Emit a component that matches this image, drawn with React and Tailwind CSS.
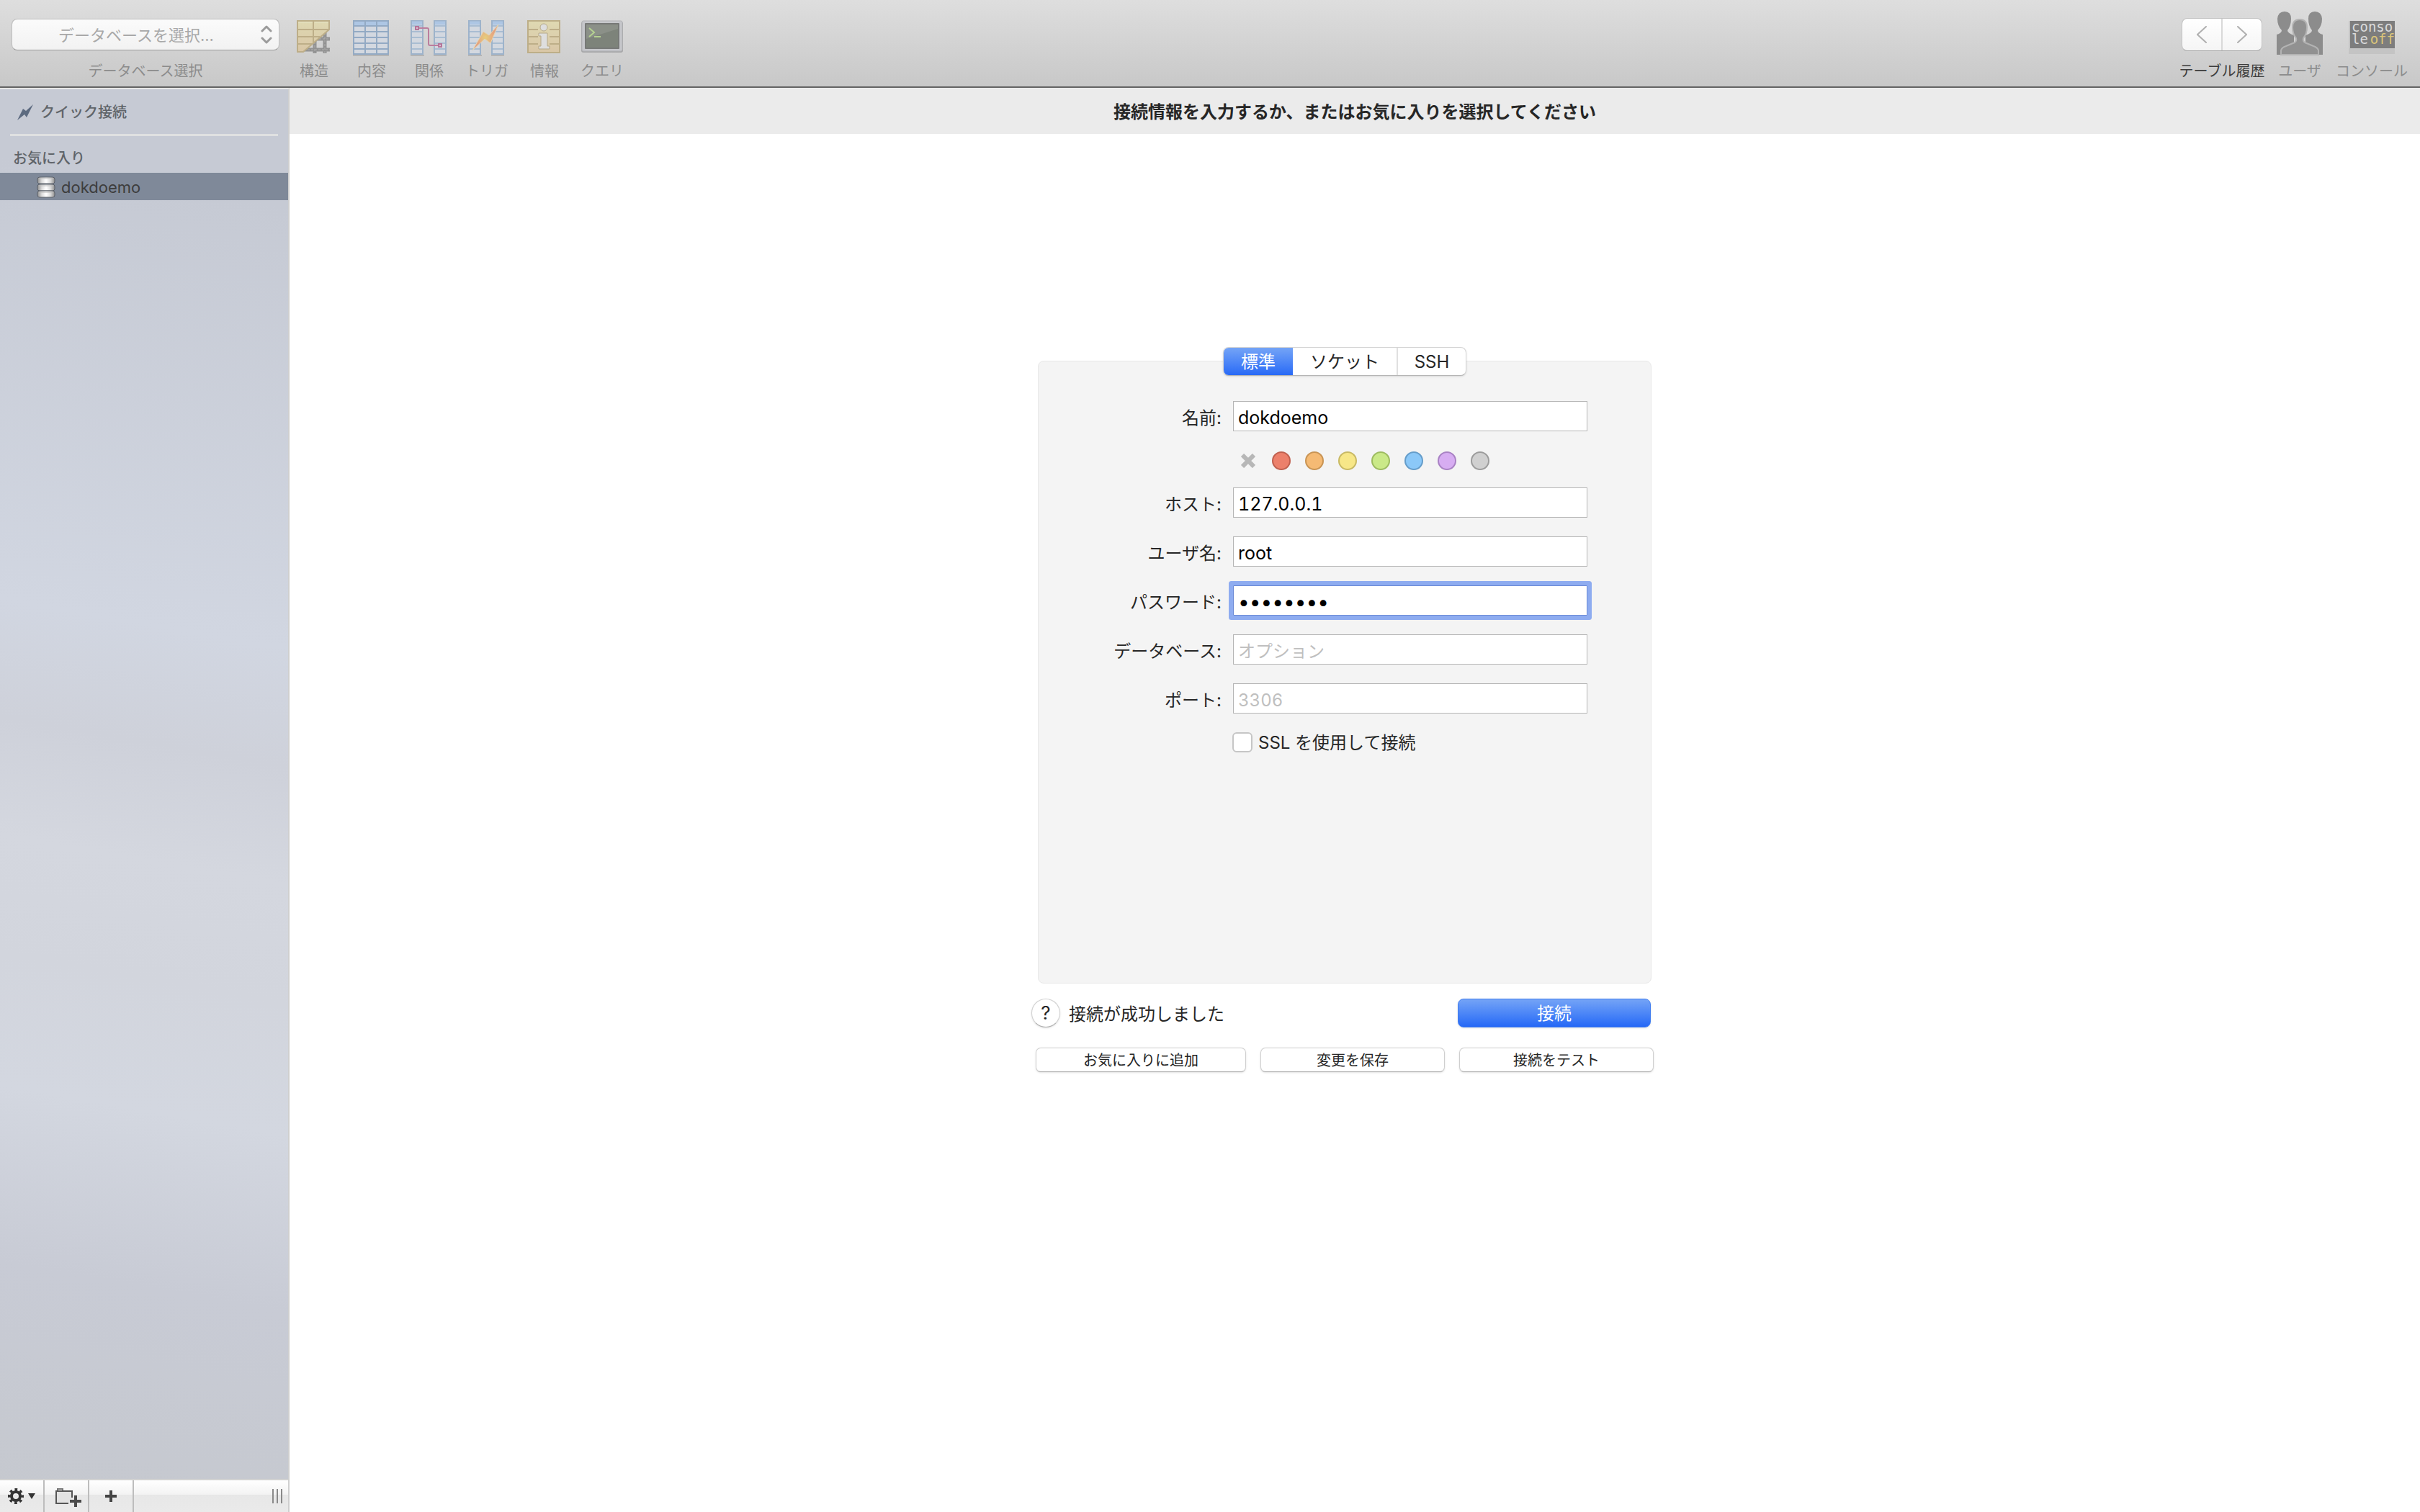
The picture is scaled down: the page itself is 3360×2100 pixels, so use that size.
// File: src/App.jsx
import { useState } from 'react';

// --- Toolbar icons ---

function StructureIcon() {
  return (
    <svg viewBox="0 0 60 60" className="w-[60px] h-[60px]" fill="none">
      <defs>
        <linearGradient id="sand" x1="0" y1="0" x2="0" y2="1">
          <stop offset="0" stopColor="#dfd9b2" />
          <stop offset="1" stopColor="#d9c6a6" />
        </linearGradient>
      </defs>
      <g stroke="#929292" strokeWidth="5">
        <path d="M30 36H52M14 51H52M31 36V56M45 26V56" />
      </g>
      <g stroke="#b0b0b0" strokeWidth="1">
        <path d="M32 36H52M16 51H52M45 28V56M31 40V56" strokeDasharray="3 2" />
      </g>
      <path d="M7 11H51V23L15 54H7Z" fill="url(#sand)" stroke="#bdae88" strokeWidth="2" />
      <path d="M29 12V41M8 23H50M8 33H38M8 43H27" stroke="#bdae88" strokeWidth="2" />
      <path d="M8 13H28M31 13H50" stroke="#e6e2c6" strokeWidth="1" />
    </svg>
  );
}

function ContentIcon() {
  return (
    <svg viewBox="0 0 60 60" className="w-[60px] h-[60px]" fill="none">
      <path d="M4 59H54" stroke="#b4b4b4" strokeWidth="2" />
      <rect x="5" y="11" width="48" height="46" fill="#d3d8e0" stroke="#93aac4" strokeWidth="2" />
      <rect x="6" y="12" width="46" height="5" fill="#adc6e4" />
      <path
        d="M6 18H52M6 26H52M6 34H52M6 42H52M6 50H52M21 11V57M37 11V57"
        stroke="#93aac4"
        strokeWidth="2"
      />
    </svg>
  );
}

function TwoTables() {
  return (
    <>
      <path d="M4 59H23M36 59H54" stroke="#b4b4b4" strokeWidth="2" />
      <rect x="5" y="11" width="16" height="46" fill="#d3d8e0" stroke="#9db3cb" strokeWidth="2" />
      <rect x="37" y="11" width="16" height="46" fill="#d3d8e0" stroke="#9db3cb" strokeWidth="2" />
      <path d="M6 14H20M38 14H52" stroke="#adc6e4" strokeWidth="5" />
      <path
        d="M6 18H20M6 26H20M6 34H20M6 42H20M6 50H20M38 18H52M38 26H52M38 34H52M38 42H52M38 50H52"
        stroke="#a9bdd2"
        strokeWidth="2"
      />
    </>
  );
}

function RelationsIcon() {
  return (
    <svg viewBox="0 0 60 60" className="w-[60px] h-[60px]" fill="none">
      <TwoTables />
      <path d="M15 21H27Q29 21 29 23V43Q29 45 31 45H43" stroke="#bb7e9e" strokeWidth="2" />
      <rect x="11" y="19" width="4" height="4" fill="#dcc3d3" stroke="#b5759a" strokeWidth="2" />
      <rect x="43" y="43" width="4" height="4" fill="#dcc3d3" stroke="#b5759a" strokeWidth="2" />
    </svg>
  );
}

function TriggersIcon() {
  return (
    <svg viewBox="0 0 60 60" className="w-[60px] h-[60px]" fill="none">
      <defs>
        <radialGradient id="bolt">
          <stop offset="0" stopColor="#e6cd7c" />
          <stop offset="0.6" stopColor="#e6a981" />
          <stop offset="1" stopColor="#e09a80" />
        </radialGradient>
      </defs>
      <TwoTables />
      <path
        d="M46 16L35 42L27 36L10 52L25 26L33 31Z"
        fill="url(#bolt)"
        stroke="#e5d5b0"
        strokeWidth="1"
      />
    </svg>
  );
}

function InfoIcon() {
  return (
    <svg viewBox="0 0 60 60" className="w-[60px] h-[60px]" fill="none">
      <rect x="7" y="11" width="44" height="44" fill="url(#sand)" stroke="#bdae88" strokeWidth="2" />
      <path
        d="M8 23H21M37 23H50M8 33H21M37 33H50M8 43H21M37 43H50M6 55H52"
        stroke="#bdae88"
        strokeWidth="2"
      />
      <circle cx="29" cy="20" r="5" fill="#dedede" stroke="#b5a98a" strokeWidth="1" />
      <path
        d="M22 28H34V46H37V50H22V46H25V32H22Z"
        fill="#dedede"
        stroke="#b5a98a"
        strokeWidth="1"
        strokeLinejoin="round"
      />
    </svg>
  );
}

function QueryIcon() {
  return (
    <svg viewBox="0 0 60 60" className="w-[60px] h-[60px]" fill="none">
      <rect x="1" y="12" width="58" height="43" rx="3" fill="#a6a6a8" />
      <rect x="2" y="11" width="56" height="42" rx="2" fill="#c6c7cb" stroke="#b2b3b6" strokeWidth="1" />
      <rect x="6" y="14" width="48" height="36" rx="1" fill="#777977" />
      <rect x="8" y="16" width="44" height="32" fill="#7d837a" />
      <path d="M8 16H52V22L8 36Z" fill="#8b9088" />
      <path d="M12 21L19 27L12 33M19 33H28" stroke="#b5d191" strokeWidth="2" />
    </svg>
  );
}

function UsersIcon() {
  return (
    <svg viewBox="0 0 64 64" className="w-16 h-16">
      <g fill="#8c8c8c">
        <path d="M0 60V32Q7 30 7 26Q1 20 1 10Q2 0 11 0Q20 0 20 10Q20 20 15 26Q15 30 24 33V60Z" />
        <path d="M64 60V32Q57 30 57 26Q63 20 63 10Q62 0 53 0Q44 0 44 10Q44 20 49 26Q49 30 40 33V60Z" />
      </g>
      <path
        d="M6 60V54Q7 50 13 48L25 43Q28 41 27 37Q22 31 22 22Q22 11 32 11Q42 11 42 22Q42 31 37 37Q36 41 39 43L51 48Q57 50 58 54V60Z"
        fill="#919191"
        stroke="#b3b3b3"
        strokeWidth="2"
      />
      <path d="M0 61H64V64H0Z" fill="#cecece" />
    </svg>
  );
}

function ConsoleIcon() {
  return (
    <div className="w-16 h-[54px] flex flex-col border-t-8 border-[#d9d9d9] bg-[#c4c4c4] pl-0.5 pb-2">
      <div className="flex-1 pl-0.5 bg-[#7d7d7d] font-['DejaVu_Sans_Mono',monospace] text-[19px] leading-[17px] text-left text-[#dadada]">
        <div>conso</div>
        <div className="flex justify-between">
          le<span className="text-[#dcc579]">off</span>
        </div>
      </div>
    </div>
  );
}

// --- Sidebar icons ---

function BoltIcon() {
  return (
    <svg viewBox="0 0 22 22" className="w-[22px] h-[22px]">
      <path d="M22 0L13 18L10 14L0 22L8 6L12 9Z" fill="#5d6b80" />
    </svg>
  );
}

function DatabaseIcon() {
  return (
    <svg viewBox="0 0 26 30" className="w-[26px] h-[30px]">
      <defs>
        <linearGradient id="disk">
          <stop offset="0" stopColor="#8d8d8d" />
          <stop offset="0.25" stopColor="#dcdcdc" />
          <stop offset="0.5" stopColor="#ffffff" />
          <stop offset="0.75" stopColor="#dcdcdc" />
          <stop offset="1" stopColor="#8d8d8d" />
        </linearGradient>
      </defs>
      {[1, 11, 20].map((y) => (
        <g key={y}>
          <rect x="1" y={y} width="24" height="9" rx="3" fill="url(#disk)" stroke="#5b6069" strokeWidth="1" />
          <path d={`M3 ${y + 2}H23`} stroke="#b9b9b9" strokeWidth="1" />
        </g>
      ))}
    </svg>
  );
}

function GearIcon() {
  return (
    <svg viewBox="0 0 22 22" className="w-[22px] h-[22px]" fill="none" stroke="#333">
      <circle cx="11" cy="11" r="6" strokeWidth="4" />
      <circle cx="11" cy="11" r="9" strokeWidth="4" strokeDasharray="3.6 3.47" strokeDashoffset="1.8" />
    </svg>
  );
}

function FolderPlusIcon() {
  return (
    <svg viewBox="0 0 38 28" className="w-[38px] h-7" fill="none" stroke="#555" strokeWidth="2">
      <path d="M20 22H3V5H25V14" fill="#e2e2e2" />
      <path d="M5 4V2H12V4" stroke="#777" />
      <path d="M30 11V27M22 19H38" strokeWidth="4" stroke="#4a4a4a" />
    </svg>
  );
}

// --- Shared pieces ---

function Tool({ label, children, className = 'w-20' }) {
  return (
    <button type="button" className={`flex flex-col items-center ${className}`}>
      <span className="h-[76px] flex items-center">{children}</span>
      <span className="text-[20px] leading-[26px] whitespace-nowrap text-[#8c8c8c]">{label}</span>
    </button>
  );
}

function Field({ id, label, type = 'text', focused = false, ...rest }) {
  return (
    <div className="flex items-center gap-4">
      <label htmlFor={id} className="w-[254px] pt-1.5 text-right text-[24px] leading-8 text-[#262626]">
        {label}
      </label>
      <input
        id={id}
        type={type}
        className={`w-[492px] h-[42px] px-1.5 pt-1 border bg-white text-black tabular-nums outline-none placeholder:text-[24px] placeholder:text-[#bfbfbf] ${
          focused
            ? 'text-[28px] border-[#6b8ad6] rounded-[1px] ring-6 ring-[#8eacf0]'
            : 'text-[25px] border-[#b5b5b5]'
        }`}
        {...rest}
      />
    </div>
  );
}

function SmallButton({ children, className }) {
  return (
    <button
      type="button"
      className={`h-[34px] pt-0.5 rounded-[7px] border border-[#cfcfcf] border-b-[#b0b0b0] bg-white text-[20px] leading-6 text-[#262626] shadow-sm ${className}`}
    >
      {children}
    </button>
  );
}

const tools = [
  { label: '構造', Icon: StructureIcon },
  { label: '内容', Icon: ContentIcon },
  { label: '関係', Icon: RelationsIcon },
  { label: 'トリガ', Icon: TriggersIcon },
  { label: '情報', Icon: InfoIcon },
  { label: 'クエリ', Icon: QueryIcon },
];

const tabs = [
  { name: '標準', width: 'w-24' },
  { name: 'ソケット', width: 'w-36' },
  { name: 'SSH', width: 'w-24' },
];

const colors = [
  { name: '赤', style: 'bg-[#ec806b] border-[#c0604f]' },
  { name: 'オレンジ', style: 'bg-[#f5ba74] border-[#c99454]' },
  { name: '黄', style: 'bg-[#f7e788] border-[#c8b964]' },
  { name: '緑', style: 'bg-[#cae988] border-[#9dbb60]' },
  { name: '青', style: 'bg-[#8bc8f8] border-[#659dca]' },
  { name: '紫', style: 'bg-[#d7adf2] border-[#a982c4]' },
  { name: 'グレー', style: 'bg-[#d0d0d0] border-[#9c9c9c]' },
];

function Toolbar() {
  return (
    <header className="flex justify-between h-[122px] pt-2.5 pl-4 pr-[15px] bg-linear-to-b from-[#dedede] to-[#c8c8c8] border-b-2 border-[#636363]">
      <div className="flex">
        <div className="w-[372px] mr-2 flex flex-col items-center">
          <div className="w-full h-[76px] flex items-center">
            <div className="relative w-full">
              <select
                id="database"
                className="appearance-none w-full h-11 pl-16 pt-0.5 rounded-lg border border-[#bcbcbc] border-b-[#999] bg-linear-to-b from-[#fbfbfb] to-[#f2f2f2] text-[22px] text-[#a8a8a8]"
              >
                <option>データベースを選択...</option>
              </select>
              <svg
                viewBox="0 0 16 26"
                className="absolute right-2.5 top-[9px] w-4 h-[26px] pointer-events-none"
                fill="none"
                stroke="#9b9b9b"
                strokeWidth="3"
                strokeLinecap="round"
                strokeLinejoin="round"
              >
                <path d="M2 8L8 2L14 8M2 18L8 24L14 18" />
              </svg>
            </div>
          </div>
          <label htmlFor="database" className="text-[20px] leading-[26px] text-[#8c8c8c]">
            データベース選択
          </label>
        </div>
        {tools.map(({ label, Icon }) => (
          <Tool key={label} label={label}>
            <Icon />
          </Tool>
        ))}
      </div>

      <div className="flex">
        <div className="w-[120px] flex flex-col items-center">
          <div className="h-[76px] flex items-center">
            <div className="flex w-28 h-[46px] rounded-lg border border-[#c2c2c2] border-b-[#a5a5a5] bg-linear-to-b from-white to-[#f5f5f5] divide-x-2 divide-[#d9d9d9]">
              <button type="button" aria-label="戻る" className="flex-1 flex items-center justify-center">
                <svg viewBox="0 0 14 24" className="w-3.5 h-6" fill="none" stroke="#b0b0b0" strokeWidth="2" strokeLinecap="round">
                  <path d="M13 1L1 12L13 23" />
                </svg>
              </button>
              <button type="button" aria-label="進む" className="flex-1 flex items-center justify-center">
                <svg viewBox="0 0 14 24" className="w-3.5 h-6" fill="none" stroke="#b0b0b0" strokeWidth="2" strokeLinecap="round">
                  <path d="M1 1L13 12L1 23" />
                </svg>
              </button>
            </div>
          </div>
          <span className="text-[20px] leading-[26px] text-[#3c3c3c] whitespace-nowrap">テーブル履歴</span>
        </div>
        <Tool label="ユーザ" className="w-24">
          <UsersIcon />
        </Tool>
        <Tool label="コンソール" className="w-[104px]">
          <ConsoleIcon />
        </Tool>
      </div>
    </header>
  );
}

function Sidebar() {
  return (
    <aside className="w-[402px] shrink-0 flex flex-col border-t-2 border-t-[#e6e6e6] border-r-2 border-r-[#cfcfcf] bg-[linear-gradient(190deg,#c6cad4_8%,#d1d6e1_38%,#ced1da_46%,#d4d7df_54%,#d2d5dd_62%,#d3d7e0_71%,#c8cbd5_83%,#c5c8ce)]">
      <nav className="flex-1">
        <a href="#quick" className="flex items-center gap-2.5 h-[62px] pl-6 pt-0.5 text-[20px] font-medium text-[#5f6469]">
          <BoltIcon />
          クイック接続
        </a>
        <hr className="mx-3.5 border-t-3 border-[#dfe0e1]" />
        <h2 className="h-[51px] pl-[18px] pt-2 text-[20px] leading-[46px] font-medium text-[#5f6469]">お気に入り</h2>
        <a href="#dokdoemo" className="flex items-center gap-2 h-[38px] pl-[51px] pt-0.5 bg-[#7f8999] text-[22px] text-[#3d3d3d]">
          <DatabaseIcon />
          dokdoemo
        </a>
      </nav>
      <div className="flex h-[46px] border-t-2 border-[#d2d2d2] bg-[linear-gradient(#ffffff,#f3f3f3_45%,#e7e7e7_45%,#eaeaea)]">
        <button type="button" aria-label="設定" className="w-[62px] flex items-center justify-center gap-1.5 border-r-2 border-[#bdbdbd]">
          <GearIcon />
          <svg viewBox="0 0 10 8" className="w-2.5 h-2">
            <path d="M0 0H10L5 8Z" fill="#333" />
          </svg>
        </button>
        <button type="button" aria-label="フォルダを追加" className="w-[62px] pl-1 pt-1 flex items-center justify-center border-r-2 border-[#bdbdbd]">
          <FolderPlusIcon />
        </button>
        <button type="button" aria-label="追加" className="w-[62px] flex items-center justify-center border-r-2 border-[#bdbdbd]">
          <svg viewBox="0 0 16 16" className="w-4 h-4" stroke="#444" strokeWidth="4">
            <path d="M8 0V16M0 8H16" />
          </svg>
        </button>
        <div className="ml-auto mr-2 flex items-center gap-1">
          <span className="w-0.5 h-5 bg-[#8a8a8a]" />
          <span className="w-0.5 h-5 bg-[#8a8a8a]" />
          <span className="w-0.5 h-5 bg-[#8a8a8a]" />
        </div>
      </div>
    </aside>
  );
}

function ConnectionForm() {
  const [tab, setTab] = useState('標準');

  return (
    <form className="w-[864px] mr-[34px]">
      <div className="ml-[9px] mr-[3px]">
        {/* Segmented control sits on the top edge of the panel */}
        <div className="relative z-10 flex w-fit mx-auto -mb-[21px] h-10 rounded-lg border border-[#d4d4d4] border-b-[#b5b5b5] bg-white shadow-sm overflow-hidden">
          {tabs.map(({ name, width }, i) => (
            <button
              key={name}
              type="button"
              onClick={() => setTab(name)}
              className={`${width} pt-0.5 text-[24px] leading-9 ${
                tab === name ? 'bg-linear-to-b from-[#74a3f6] to-[#2869f6] text-white' : 'text-[#262626]'
              } ${i === 2 ? 'border-l-2 border-[#e0e0e0]' : ''}`}
            >
              {name}
            </button>
          ))}
        </div>

        <div className="min-h-[865px] pt-[55px] rounded-lg border border-[#e8e8e8] bg-[#f4f4f4]">
          <Field id="name" label="名前:" defaultValue="dokdoemo" />
          <div className="flex items-center gap-5 h-[26px] mt-7 mb-6 pl-[278px]">
            <button type="button" aria-label="色なし" className="w-[26px] h-[26px] flex items-center justify-center">
              <svg viewBox="0 0 20 20" className="w-5 h-5" stroke="#b7b7b7" strokeWidth="6">
                <path d="M2 2L18 18M18 2L2 18" />
              </svg>
            </button>
            {colors.map((c) => (
              <button key={c.name} type="button" aria-label={c.name} className={`w-[26px] h-[26px] rounded-full border-2 ${c.style}`} />
            ))}
          </div>
          <div className="flex flex-col gap-[26px]">
            <Field id="host" label="ホスト:" defaultValue="127.0.0.1" />
            <Field id="user" label="ユーザ名:" defaultValue="root" />
            <Field id="password" label="パスワード:" type="password" defaultValue="password" focused />
            <Field id="schema" label="データベース:" placeholder="オプション" />
            <Field id="port" label="ポート:" placeholder="3306" />
          </div>
          <div className="flex items-center gap-2 mt-[25px] pl-[269px]">
            <input
              id="ssl"
              type="checkbox"
              className="appearance-none w-7 h-7 rounded-md border-2 border-[#c6c6c6] bg-white"
            />
            <label htmlFor="ssl" className="pt-0.5 text-[24px] leading-7 text-[#262626]">
              SSL を使用して接続
            </label>
          </div>
        </div>
      </div>

      <div className="flex items-center mt-[21px] mr-1">
        <button
          type="button"
          className="w-10 h-10 rounded-full border border-[#d0d0d0] border-b-[#b0b0b0] bg-white text-[26px] leading-8 text-[#262626] shadow-sm"
        >
          ?
        </button>
        <span className="pl-3 pt-1 text-[24px] leading-8 text-[#262626]">接続が成功しました</span>
        <button
          type="submit"
          className="ml-auto w-[268px] h-10 pt-0.5 rounded-lg border border-[#3f7cf0] bg-linear-to-b from-[#74a3f6] to-[#2467f6] text-[24px] leading-8 text-white shadow-sm"
        >
          接続
        </button>
      </div>

      <div className="flex justify-between mt-7 pl-1.5">
        <SmallButton className="w-[292px]">お気に入りに追加</SmallButton>
        <SmallButton className="w-[256px]">変更を保存</SmallButton>
        <SmallButton className="w-[270px]">接続をテスト</SmallButton>
      </div>
    </form>
  );
}

export default function App() {
  return (
    <div lang="ja" className="h-screen flex flex-col bg-white font-['Inter','Noto_Sans_CJK_JP',sans-serif]">
      <Toolbar />
      <div className="flex-1 flex min-h-0">
        <Sidebar />
        <main className="flex-1 flex flex-col">
          <h1 className="h-16 bg-[#ebebeb] text-center text-[24px] leading-[68px] font-bold text-[#262626]">
            接続情報を入力するか、またはお気に入りを選択してください
          </h1>
          <div className="flex justify-center pt-[296px]">
            <ConnectionForm />
          </div>
        </main>
      </div>
    </div>
  );
}
